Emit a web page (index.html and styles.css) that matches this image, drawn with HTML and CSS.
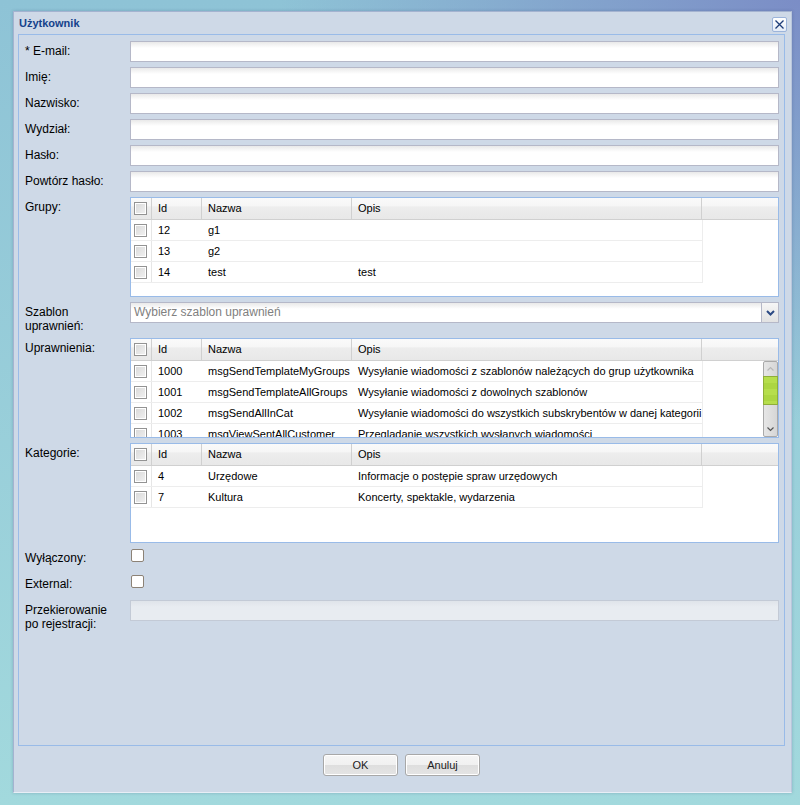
FILE: index.html
```html
<!DOCTYPE html>
<html lang="pl">

<head>
    <meta charset="UTF-8">
    <meta name="viewport" content="width=device-width, initial-scale=1.0">
    <title>Użytkownik</title>
    <link rel="stylesheet" href="styles.css">
</head>

<body>
    <div class="window">
        <div class="window-header">
            <span class="window-title">Użytkownik</span>
            <span class="tool-close">
                <svg width="11" height="11" viewBox="0 0 11 11">
                    <path d="M1.5 1.5 L9.5 9.5 M9.5 1.5 L1.5 9.5" stroke="#1d3c78" stroke-width="1.3" fill="none" />
                </svg>
            </span>
        </div>

        <div class="window-body">
            <div class="form-row">
                <label class="form-label">* E-mail:</label>
                <div class="form-field"><input type="text" class="text-field"></div>
            </div>
            <div class="form-row">
                <label class="form-label">Imię:</label>
                <div class="form-field"><input type="text" class="text-field"></div>
            </div>
            <div class="form-row">
                <label class="form-label">Nazwisko:</label>
                <div class="form-field"><input type="text" class="text-field"></div>
            </div>
            <div class="form-row">
                <label class="form-label">Wydział:</label>
                <div class="form-field"><input type="text" class="text-field"></div>
            </div>
            <div class="form-row">
                <label class="form-label">Hasło:</label>
                <div class="form-field"><input type="password" class="text-field"></div>
            </div>
            <div class="form-row">
                <label class="form-label">Powtórz hasło:</label>
                <div class="form-field"><input type="password" class="text-field"></div>
            </div>

            <!-- groups -->
            <div class="form-row">
                <label class="form-label">Grupy:</label>
                <div class="form-field">
                    <div class="grid">
                        <div class="grid-header">
                            <div class="cell col-check"><span class="grid-check"></span></div>
                            <div class="cell col-id">Id</div>
                            <div class="cell col-name">Nazwa</div>
                            <div class="cell col-desc">Opis</div>
                        </div>
                        <div class="grid-body">
                            <div class="grid-rows">
                                <div class="grid-row">
                                    <div class="cell col-check"><span class="grid-check"></span></div>
                                    <div class="cell col-id">12</div>
                                    <div class="cell col-name">g1</div>
                                    <div class="cell col-desc"></div>
                                </div>
                                <div class="grid-row">
                                    <div class="cell col-check"><span class="grid-check"></span></div>
                                    <div class="cell col-id">13</div>
                                    <div class="cell col-name">g2</div>
                                    <div class="cell col-desc"></div>
                                </div>
                                <div class="grid-row">
                                    <div class="cell col-check"><span class="grid-check"></span></div>
                                    <div class="cell col-id">14</div>
                                    <div class="cell col-name">test</div>
                                    <div class="cell col-desc">test</div>
                                </div>
                            </div>
                        </div>
                    </div>
                </div>
            </div>

            <div class="form-row row-template">
                <label class="form-label">Szablon uprawnień:</label>
                <div class="form-field">
                    <div class="combo">
                        <span class="combo-text">Wybierz szablon uprawnień</span>
                        <span class="combo-trigger">
                            <svg width="9" height="6" viewBox="0 0 9 6">
                                <path d="M1 1 L4.5 4.5 L8 1" stroke="#2c4a84" stroke-width="2" fill="none" />
                            </svg>
                        </span>
                    </div>
                </div>
            </div>

            <!-- permissions -->
            <div class="form-row">
                <label class="form-label">Uprawnienia:</label>
                <div class="form-field">
                    <div class="grid">
                        <div class="grid-header">
                            <div class="cell col-check"><span class="grid-check"></span></div>
                            <div class="cell col-id">Id</div>
                            <div class="cell col-name">Nazwa</div>
                            <div class="cell col-desc">Opis</div>
                        </div>
                        <div class="grid-body">
                            <div class="grid-rows">
                                <div class="grid-row">
                                    <div class="cell col-check"><span class="grid-check"></span></div>
                                    <div class="cell col-id">1000</div>
                                    <div class="cell col-name">msgSendTemplateMyGroups</div>
                                    <div class="cell col-desc">Wysyłanie wiadomości z szablonów należących do grup użytkownika</div>
                                </div>
                                <div class="grid-row">
                                    <div class="cell col-check"><span class="grid-check"></span></div>
                                    <div class="cell col-id">1001</div>
                                    <div class="cell col-name">msgSendTemplateAllGroups</div>
                                    <div class="cell col-desc">Wysyłanie wiadomości z dowolnych szablonów</div>
                                </div>
                                <div class="grid-row">
                                    <div class="cell col-check"><span class="grid-check"></span></div>
                                    <div class="cell col-id">1002</div>
                                    <div class="cell col-name">msgSendAllInCat</div>
                                    <div class="cell col-desc">Wysyłanie wiadomości do wszystkich subskrybentów w danej kategorii</div>
                                </div>
                                <div class="grid-row">
                                    <div class="cell col-check"><span class="grid-check"></span></div>
                                    <div class="cell col-id">1003</div>
                                    <div class="cell col-name">msgViewSentAllCustomer</div>
                                    <div class="cell col-desc">Przeglądanie wszystkich wysłanych wiadomości</div>
                                </div>
                            </div>
                            <div class="scrollbar">
                                <span class="scroll-btn">
                                    <svg width="9" height="6" viewBox="0 0 9 6">
                                        <path d="M1.5 4.5 L4.5 1.5 L7.5 4.5" stroke="#b8b8b8" stroke-width="1.2" fill="none" />
                                    </svg>
                                </span>
                                <span class="scroll-track"><span class="scroll-thumb"></span></span>
                                <span class="scroll-btn">
                                    <svg width="9" height="6" viewBox="0 0 9 6">
                                        <path d="M1.5 1.5 L4.5 4.5 L7.5 1.5" stroke="#555" stroke-width="1.2" fill="none" />
                                    </svg>
                                </span>
                            </div>
                        </div>
                    </div>
                </div>
            </div>

            <!-- categories -->
            <div class="form-row">
                <label class="form-label">Kategorie:</label>
                <div class="form-field">
                    <div class="grid">
                        <div class="grid-header">
                            <div class="cell col-check"><span class="grid-check"></span></div>
                            <div class="cell col-id">Id</div>
                            <div class="cell col-name">Nazwa</div>
                            <div class="cell col-desc">Opis</div>
                        </div>
                        <div class="grid-body">
                            <div class="grid-rows">
                                <div class="grid-row">
                                    <div class="cell col-check"><span class="grid-check"></span></div>
                                    <div class="cell col-id">4</div>
                                    <div class="cell col-name">Urzędowe</div>
                                    <div class="cell col-desc">Informacje o postępie spraw urzędowych</div>
                                </div>
                                <div class="grid-row">
                                    <div class="cell col-check"><span class="grid-check"></span></div>
                                    <div class="cell col-id">7</div>
                                    <div class="cell col-name">Kultura</div>
                                    <div class="cell col-desc">Koncerty, spektakle, wydarzenia</div>
                                </div>
                            </div>
                        </div>
                    </div>
                </div>
            </div>

            <div class="form-row">
                <label class="form-label">Wyłączony:</label>
                <div class="form-field"><span class="checkbox"></span></div>
            </div>
            <div class="form-row">
                <label class="form-label">External:</label>
                <div class="form-field"><span class="checkbox"></span></div>
            </div>
            <div class="form-row">
                <label class="form-label">Przekierowanie po rejestracji:</label>
                <div class="form-field"><input type="text" class="text-field" disabled></div>
            </div>
        </div>

        <div class="window-footer">
            <button class="btn">OK</button>
            <button class="btn">Anuluj</button>
        </div>
    </div>
</body>

</html>
```

FILE: styles.css
```css
html,
body {
    margin: 0;
    height: 805px;
    overflow: hidden;
}

body {
    font-family: "Liberation Sans", Arial, sans-serif;
    font-size: 12px;
    color: #000;
    background:
        radial-gradient(ellipse 520px 420px at 100% 0%, #7b8dc6 0%, rgba(123, 141, 198, 0) 100%),
        linear-gradient(#8ec3d6, #a2d9dd);
}

.window {
    width: 779px;
    margin: 11px 0 0 13px;
    box-sizing: border-box;
    background-color: #ced9e7;
    border: 1px solid #a4b3d0;
    border-right-color: #b9c6dc;
    border-bottom-color: #e8eef6;
    box-shadow: 0 0 3px rgba(40, 60, 100, 0.25);
    padding: 0 6px 0 4px;
}

.window-header {
    height: 22px;
    display: flex;
    align-items: center;
    justify-content: space-between;
    padding-left: 1px;
}

.window-title {
    font-size: 11px;
    font-weight: bold;
    color: #15428b;
}

.tool-close {
    width: 13px;
    height: 13px;
    margin-right: -2px;
    margin-top: 2px;
    display: flex;
    align-items: center;
    justify-content: center;
    background: linear-gradient(#ffffff, #e4ecf7);
    border: 1px solid #9cb4da;
    border-radius: 2px;
}

.window-body {
    height: 712px;
    box-sizing: border-box;
    border: 1px solid #99bbe8;
    padding: 6px 5px 0 6px;
}

.form-row {
    display: flex;
    margin-bottom: 5px;
}

.form-label {
    width: 105px;
    flex-shrink: 0;
    padding: 3px 8px 0 0;
    line-height: 14px;
    box-sizing: border-box;
}

.form-field {
    flex: 1;
    min-height: 21px;
}

.text-field {
    display: block;
    width: 100%;
    height: 21px;
    box-sizing: border-box;
    margin: 0;
    padding: 1px 3px;
    font: 12px "Liberation Sans", Arial, sans-serif;
    border: 1px solid #b5b8c8;
    background: linear-gradient(#e9e9e9 0, #ffffff 6px);
}

.text-field:disabled {
    border-color: #c3cad6;
    background: linear-gradient(#dfe4ea 0, #e8ecf1 6px);
}

/* combo */
.combo {
    display: flex;
    height: 21px;
    box-sizing: border-box;
    border: 1px solid #b5b8c8;
    background: linear-gradient(#e9e9e9 0, #ffffff 6px);
}

.combo-text {
    flex: 1;
    padding-left: 3px;
    line-height: 19px;
    color: #808080;
}

.combo-trigger {
    width: 16px;
    display: flex;
    align-items: center;
    justify-content: center;
    border-left: 1px solid #b5b8c8;
    background: linear-gradient(#f6f6f6, #e2e2e2);
}

/* grids */
.grid {
    height: 100px;
    box-sizing: border-box;
    border: 1px solid #99bbe8;
    background-color: #fff;
    display: flex;
    flex-direction: column;
    font-size: 11px;
}

.grid-header {
    display: flex;
    height: 22px;
    flex-shrink: 0;
    box-sizing: border-box;
    border-bottom: 1px solid #d0d0d0;
    background: linear-gradient(#fafafa 0%, #f6f6f6 38%, #ededed 42%, #e8e8e8 100%);
}

.grid-header .cell {
    height: 21px;
    line-height: 21px;
    border-right: 1px solid #d0d0d0;
}

.grid-body {
    flex: 1;
    display: flex;
    min-height: 0;
}

.grid-rows {
    flex: 1;
    overflow: hidden;
}

.grid-row {
    display: flex;
    width: 572px;
    height: 21px;
    box-sizing: border-box;
    border-bottom: 1px solid #ededed;
    border-right: 1px solid #ededed;
}

.cell {
    height: 20px;
    line-height: 20px;
    padding: 0 0 0 6px;
    box-sizing: border-box;
    white-space: nowrap;
    overflow: hidden;
    flex-shrink: 0;
}

.col-check {
    width: 21px;
    padding: 0;
    display: flex;
    align-items: center;
    justify-content: center;
    border-right: 1px solid #e6e6e6;
}

.col-id {
    width: 50px;
}

.col-name {
    width: 150px;
}

.col-desc {
    width: 350px;
    padding-right: 0;
}

.grid-check {
    width: 11px;
    height: 11px;
    margin-left: -1px;
    border: 1px solid #939393;
    box-shadow: inset 0 0 0 1px #ffffff;
    background: linear-gradient(135deg, #d8d8d8, #f2f2f2);
}

/* scrollbar */
.scrollbar {
    width: 15px;
    box-sizing: border-box;
    display: flex;
    flex-direction: column;
    border: 1px solid #a9a9a9;
    border-radius: 2px;
    background: linear-gradient(90deg, #e6e6e6, #d6d6d6);
}

.scroll-btn {
    height: 14px;
    display: flex;
    align-items: center;
    justify-content: center;
}

.scroll-track {
    flex: 1;
}

.scroll-thumb {
    display: block;
    height: 29px;
    margin: 0 -1px;
    box-sizing: border-box;
    border: 1px solid #8fae3a;
    background: repeating-linear-gradient(#b6de4c 0 6px, #acd642 6px 12px);
}

/* plain checkboxes */
.checkbox {
    display: block;
    width: 11px;
    height: 11px;
    margin: 1px 0 0 1px;
    border: 1px solid #8c8276;
    border-radius: 2px;
    background-color: #fff;
}

/* footer */
.window-footer {
    height: 46px;
    box-sizing: border-box;
    padding-top: 8px;
    display: flex;
    justify-content: center;
    gap: 7px;
}

.btn {
    width: 75px;
    height: 22px;
    margin: 0;
    padding: 0;
    font: 11px "Liberation Sans", Arial, sans-serif;
    color: #222;
    border: 1px solid #a8a8a8;
    border-radius: 3px;
    box-shadow: inset 0 0 0 1px #ffffff;
    background: linear-gradient(#f5f5f5 0%, #f0f0f0 50%, #dedede 50%, #e4e4e4 100%);
}
```
